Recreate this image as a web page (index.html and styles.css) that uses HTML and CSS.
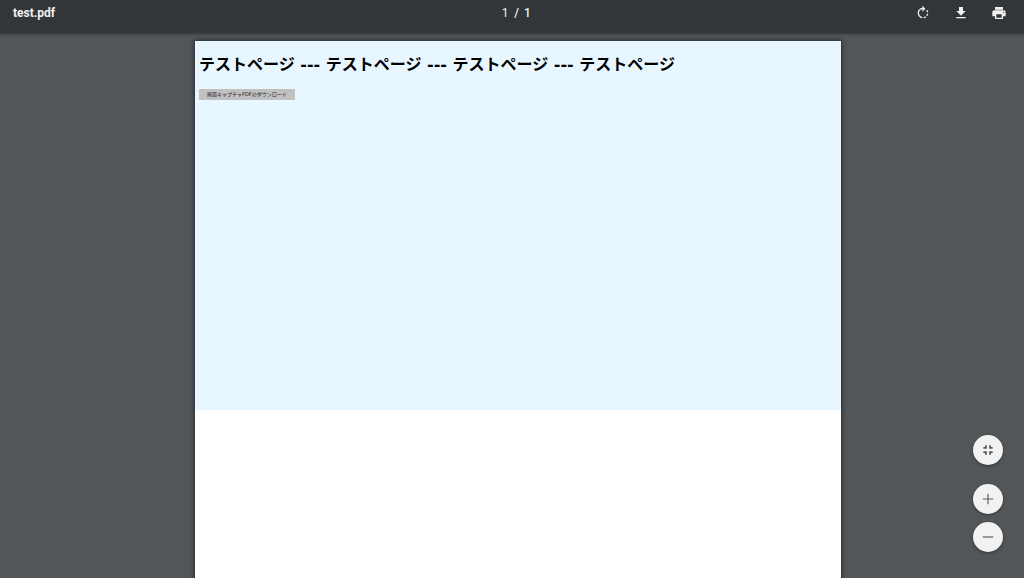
FILE: index.html
```html
<!DOCTYPE html>
<html lang="ja">
	<head>
		<meta charset="UTF-8">
		<title>test.pdf</title>
		<link rel="stylesheet" href="styles.css">
	</head>
	<body>
		<header class="toolbar">
			<span class="file-name">test.pdf</span>
			<div class="page-number">
				<input class="page-input" type="text" value="1" aria-label="ページ">
				<span>/</span>
				<span>1</span>
			</div>
			<div class="tools">
				<button class="tool" type="button" aria-label="回転">
					<svg viewBox="0 0 24 24"><path d="M15.55 5.55L11 1v3.07C7.06 4.56 4 7.92 4 12s3.05 7.44 7 7.93v-2.02c-2.84-.48-5-2.94-5-5.91s2.16-5.43 5-5.91V10l4.55-4.45zM19.93 11c-.17-1.39-.72-2.73-1.62-3.89l-1.42 1.42c.54.75.88 1.6 1.02 2.47h2.02zM13 17.9v2.02c1.39-.17 2.74-.71 3.9-1.61l-1.44-1.44c-.75.54-1.59.89-2.46 1.03zm3.89-2.42l1.42 1.41c.9-1.16 1.45-2.5 1.62-3.89h-2.02c-.14.87-.48 1.72-1.02 2.48z"/></svg>
				</button>
				<button class="tool" type="button" aria-label="ダウンロード">
					<svg viewBox="0 0 24 24"><path d="M19 9h-4V3H9v6H5l7 7 7-7zM5 18v2h14v-2H5z"/></svg>
				</button>
				<button class="tool" type="button" aria-label="印刷">
					<svg viewBox="0 0 24 24"><path d="M19 8H5c-1.66 0-3 1.34-3 3v6h4v4h12v-4h4v-6c0-1.66-1.34-3-3-3zm-3 11H8v-5h8v5zm3-7c-.55 0-1-.45-1-1s.45-1 1-1 1 .45 1 1-.45 1-1 1zm-1-9H6v4h12V3z"/></svg>
				</button>
			</div>
		</header>
		<main class="viewer">
			<div class="page">
				<div class="capture">
					<h1>テストページ --- テストページ --- テストページ --- テストページ</h1>
					<button class="download" type="button">画面キャプチャPDFのダウンロード</button>
				</div>
			</div>
		</main>
		<div class="zoom">
			<button class="round fit" type="button" aria-label="ページに合わせる">
				<svg viewBox="0 0 24 24"><path d="M4 14h6v6H7v-3H4zM10 4v6H4V7h3V4zM14 20v-6h6v3h-3v3zM17 4v3h3v3h-6V4z"/></svg>
			</button>
			<button class="round" type="button" aria-label="拡大">
				<svg viewBox="0 0 24 24"><path d="M21 13h-8v8h-2v-8H3v-2h8V3h2v8h8z"/></svg>
			</button>
			<button class="round" type="button" aria-label="縮小">
				<svg viewBox="0 0 24 24"><path d="M3 11h18v2H3z"/></svg>
			</button>
		</div>
	</body>
</html>
```
FILE: styles.css
```css
*{
	box-sizing: border-box;
	margin: 0;
	padding: 0;
}
body{
	height: 100vh;
	display: flex;
	flex-direction: column;
	overflow: hidden;
	background-color: #525659;
	font-family: Roboto, "Noto Sans CJK JP", sans-serif;
}
button{
	border: none;
}
svg{
	display: block;
}

/* ツールバー */
.toolbar{
	flex: none;
	height: 33px;
	padding: 0 17px 7px 13px;
	display: grid;
	grid-template-columns: 1fr auto 1fr;
	align-items: center;
	background-color: #323639;
	color: #f1f1f1;
	font-size: 12px;
	font-weight: 500;
	box-shadow: 0 1px 3px rgba(0,0,0,0.4);
	z-index: 1;
}
.file-name{
	font-weight: 700;
}
.page-number{
	padding-left: 12px;
	display: flex;
	align-items: center;
	gap: 5px;
}
.page-input{
	width: 8px;
	border: none;
	background: none;
	color: inherit;
	font: 400 12px Roboto, sans-serif;
	text-align: center;
}
.tools{
	display: flex;
	justify-content: flex-end;
	gap: 22px;
}
.tool{
	width: 16px;
	height: 16px;
	background: none;
	fill: #f1f1f1;
}

/* PDFのページ */
.viewer{
	flex: 1;
	min-height: 0;
	padding: 8px 0 0 12px;
	overflow: hidden;
}
.page{
	max-width: 646px;
	aspect-ratio: 210 / 297;
	margin: 0 auto;
	background-color: #fff;
	box-shadow: 0 0 4px 1px rgba(0,0,0,0.5);
}
.capture{
	aspect-ratio: 7 / 4;
	padding: 12px 4px;
	background-color: #e8f6ff;
}
h1{
	margin-bottom: 12px;
	color: #000;
	font-family: "DejaVu Sans", "Noto Sans CJK JP", sans-serif;
	font-size: 16px;
	line-height: 24px;
}
.download{
	display: block;
	padding: 0 8px;
	background-color: #c0c0c0;
	color: #222;
	font-family: "DejaVu Sans", "Noto Sans CJK JP", sans-serif;
	font-size: 5px;
	line-height: 11px;
}

/* ズームボタン */
.zoom{
	position: fixed;
	right: 21px;
	bottom: 26px;
	display: flex;
	flex-direction: column;
	gap: 8px;
	z-index: 2;
}
.round{
	width: 30px;
	height: 30px;
	padding: 8px;
	border-radius: 50%;
	background-color: #f2f2f2;
	fill: #5a5a5a;
	box-shadow: 0 1px 3px rgba(0,0,0,0.4);
}
.fit{
	margin-bottom: 11px;
}
```
